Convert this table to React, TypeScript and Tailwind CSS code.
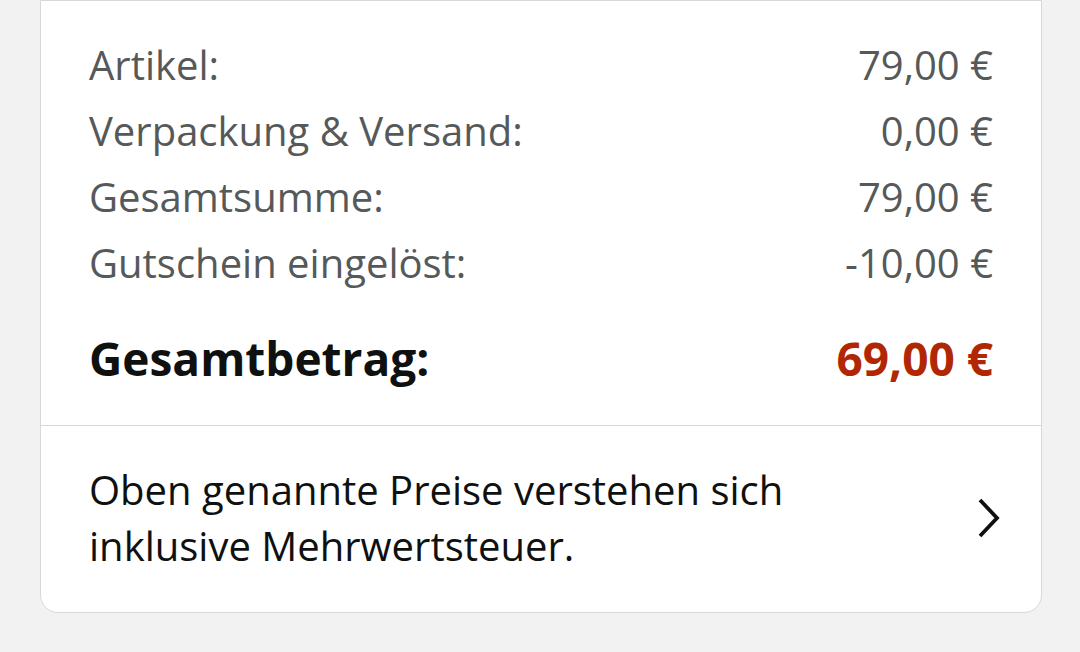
const ROWS: [string, string][] = [
  ['Artikel:', '79,00 €'],
  ['Verpackung & Versand:', '0,00 €'],
  ['Gesamtsumme:', '79,00 €'],
  ['Gutschein eingelöst:', '-10,00 €'],
];

export default function App() {
  return (
    <div className="h-[652px] w-[1080px] bg-[#f2f2f2] pl-[40px] pr-[38px] font-['Open_Sans',sans-serif]">
      <div className="rounded-b-[18px] border border-[#d5d9d9] bg-white">
        <div className="pl-[48px] pr-[48px] pt-[31px] pb-[32px]">
          {ROWS.map(([label, value]) => (
            <div key={label} className="flex h-[66px] items-center justify-between text-[40px] text-[#565959]">
              <span>{label}</span>
              <span>{value}</span>
            </div>
          ))}
          <div className="mt-[28px] flex items-center justify-between text-[46px] font-bold text-[#0f1111]">
            <span>Gesamtbetrag:</span>
            <span className="text-[#b12704]">69,00 €</span>
          </div>
        </div>
        <div className="flex items-center justify-between border-t border-[#d5d9d9] pt-[36px] pb-[38px] pl-[48px] pr-[40px]">
          <p className="text-[40px] leading-[56px] text-[#0f1111]">
            Oben genannte Preise verstehen sich
            <br />
            inklusive Mehrwertsteuer.
          </p>
          <svg width="24" height="40" viewBox="0 0 24 40" fill="none" stroke="#0f1111" strokeWidth="3.8">
            <polyline points="3,2 20,20 3,38" />
          </svg>
        </div>
      </div>
    </div>
  );
}
